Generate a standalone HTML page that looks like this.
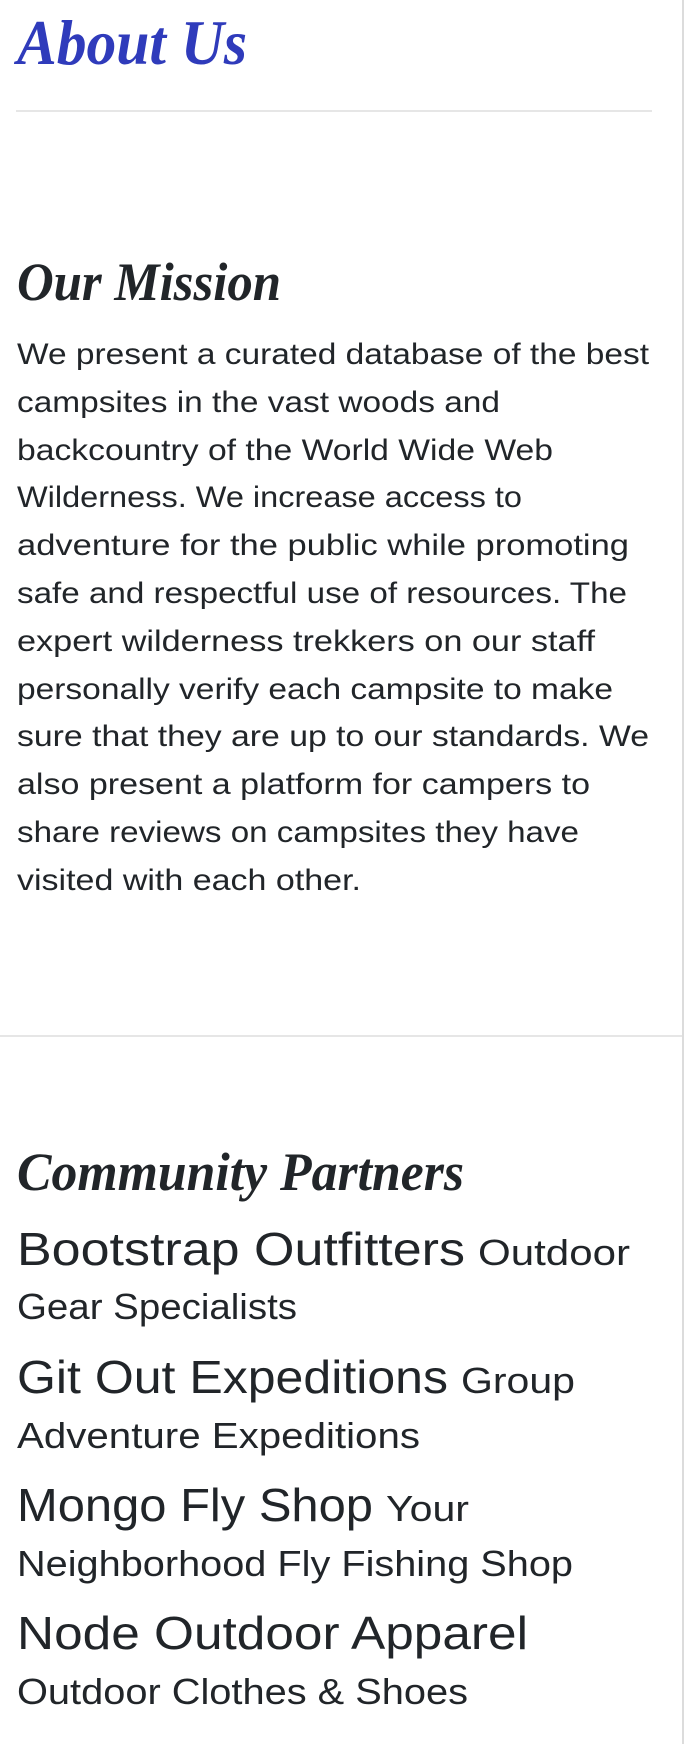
<!DOCTYPE html>
<html><head><meta charset="utf-8"><style>
html,body{margin:0;padding:0;background:#fff;width:688px;height:1744px;overflow:hidden}
svg{display:block}
.h{font-family:"Liberation Serif",serif;font-weight:bold;font-style:italic}
.p{font-family:"Liberation Sans",sans-serif;fill:#212529}
</style></head><body>
<svg width="688" height="1744" viewBox="0 0 688 1744" xmlns="http://www.w3.org/2000/svg">
<rect x="682" y="0" width="2" height="1744" fill="#dcdcdc"/>
<text class="h" x="17" y="64" font-size="64" fill="#2f3bbb" textLength="230" lengthAdjust="spacingAndGlyphs">About Us</text>
<rect x="16" y="110" width="636" height="2" fill="#e6e6e6"/>
<text class="h" x="17" y="300" font-size="54" fill="#212529" textLength="264" lengthAdjust="spacingAndGlyphs">Our Mission</text>
<g class="p" font-size="30">
<text x="17" y="364" textLength="632" lengthAdjust="spacingAndGlyphs">We present a curated database of the best</text>
<text x="17" y="412" textLength="483" lengthAdjust="spacingAndGlyphs">campsites in the vast woods and</text>
<text x="17" y="460" textLength="536" lengthAdjust="spacingAndGlyphs">backcountry of the World Wide Web</text>
<text x="17" y="507" textLength="505" lengthAdjust="spacingAndGlyphs">Wilderness. We increase access to</text>
<text x="17" y="555" textLength="612" lengthAdjust="spacingAndGlyphs">adventure for the public while promoting</text>
<text x="17" y="603" textLength="610" lengthAdjust="spacingAndGlyphs">safe and respectful use of resources. The</text>
<text x="17" y="651" textLength="578" lengthAdjust="spacingAndGlyphs">expert wilderness trekkers on our staff</text>
<text x="17" y="699" textLength="596" lengthAdjust="spacingAndGlyphs">personally verify each campsite to make</text>
<text x="17" y="746" textLength="632" lengthAdjust="spacingAndGlyphs">sure that they are up to our standards. We</text>
<text x="17" y="794" textLength="573" lengthAdjust="spacingAndGlyphs">also present a platform for campers to</text>
<text x="17" y="842" textLength="562" lengthAdjust="spacingAndGlyphs">share reviews on campsites they have</text>
<text x="17" y="890" textLength="344" lengthAdjust="spacingAndGlyphs">visited with each other.</text>
</g>
<rect x="0" y="1035" width="682" height="2" fill="#e6e6e6"/>
<text class="h" x="17" y="1190" font-size="54" fill="#212529" textLength="447" lengthAdjust="spacingAndGlyphs">Community Partners</text>
<g class="p">
<text x="17" y="1265" font-size="46" textLength="448" lengthAdjust="spacingAndGlyphs">Bootstrap Outfitters</text>
<text x="478" y="1265" font-size="36" textLength="152" lengthAdjust="spacingAndGlyphs">Outdoor</text>
<text x="17" y="1319" font-size="36" textLength="280" lengthAdjust="spacingAndGlyphs">Gear Specialists</text>
<text x="17" y="1393" font-size="46" textLength="431" lengthAdjust="spacingAndGlyphs">Git Out Expeditions</text>
<text x="461" y="1393" font-size="36" textLength="114" lengthAdjust="spacingAndGlyphs">Group</text>
<text x="17" y="1448" font-size="36" textLength="403" lengthAdjust="spacingAndGlyphs">Adventure Expeditions</text>
<text x="17" y="1521" font-size="46" textLength="356" lengthAdjust="spacingAndGlyphs">Mongo Fly Shop</text>
<text x="386" y="1521" font-size="36" textLength="83" lengthAdjust="spacingAndGlyphs">Your</text>
<text x="17" y="1576" font-size="36" textLength="556" lengthAdjust="spacingAndGlyphs">Neighborhood Fly Fishing Shop</text>
<text x="17" y="1649" font-size="46" textLength="511" lengthAdjust="spacingAndGlyphs">Node Outdoor Apparel</text>
<text x="17" y="1704" font-size="36" textLength="451" lengthAdjust="spacingAndGlyphs">Outdoor Clothes &amp; Shoes</text>
</g>
</svg>
</body></html>
